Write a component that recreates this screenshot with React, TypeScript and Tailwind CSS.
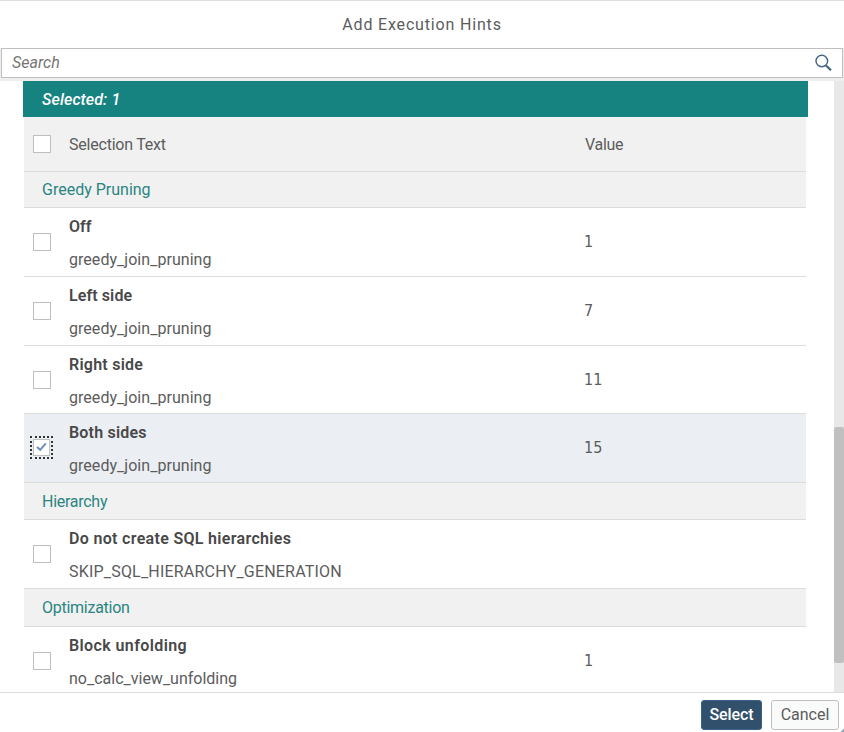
import type { ReactNode } from "react";

function Checkbox({ checked = false }: { checked?: boolean }) {
  return (
    <span
      className={
        checked
          ? "-mt-px flex h-[23px] w-[23px] items-center justify-center border-2 border-dotted border-[#333] bg-[#ebeef3]"
          : "flex h-[23px] w-[23px] items-center justify-center"
      }
    >
      <span
        className={
          checked
            ? "flex h-[17px] w-[17px] shrink-0 items-center justify-center border border-[#bfbfbf] bg-white"
            : "flex h-[18px] w-[18px] shrink-0 items-center justify-center border border-[#bfbfbf] bg-white"
        }
      >
        {checked && (
          <svg viewBox="0 0 11 10" className="-mt-[2px] h-[10px] w-[11px]" fill="none" stroke="#6a8fb8" strokeWidth="2">
            <path d="M1 5 4.2 7.8 9.8 1.4" />
          </svg>
        )}
      </span>
    </span>
  );
}

function Group({ className, children }: { className: string; children: ReactNode }) {
  return (
    <div className={`flex items-center border-b border-[#dcdcdc] bg-[#f1f1f1] pl-[18px] text-[#2a8581] ${className}`}>
      {children}
    </div>
  );
}

interface RowProps {
  title: string;
  titleClass: string;
  code: string;
  codeClass: string;
  value?: string;
  checked?: boolean;
  height: string;
}

function Row({ title, titleClass, code, codeClass, value, checked, height }: RowProps) {
  return (
    <div className={`flex border-b border-[#dcdcdc] pl-[6px] ${height} ${checked ? "bg-[#ebeef3]" : "bg-white"}`}>
      <div className="flex w-[39px] items-center">
        <Checkbox checked={checked} />
      </div>
      <div className="flex w-[515px] flex-col pt-[8px]">
        <span className={`h-[33px] font-semibold leading-[22px] text-[#484848] ${titleClass}`}>{title}</span>
        <span className={`leading-[22px] ${codeClass}`}>{code}</span>
      </div>
      <div className="flex items-center font-['DejaVu_Sans_Condensed','DejaVu_Sans',sans-serif] text-[16px] [font-stretch:condensed]">
        {value}
      </div>
    </div>
  );
}

const pruning = "greedy_join_pruning";

export default function App() {
  return (
    <div className="flex h-[732px] w-[844px] flex-col overflow-hidden whitespace-nowrap border-t border-[#dedede] bg-white font-[Roboto,sans-serif] text-[16px] text-[#5c5c5c]">
      <header className="flex h-[47px] shrink-0 items-center justify-center">
        <h1 className="tracking-[0.83px]">Add Execution Hints</h1>
      </header>

      <div className="h-[33px] shrink-0 bg-[#eeeeee] px-px">
        <div className="flex h-[30px] items-center justify-between border border-[#bfbfbf] bg-white pl-[10px] pr-[10px]">
          <span className="italic text-[#757575]">Search</span>
          <svg viewBox="0 0 18 18" className="h-[18px] w-[18px]" fill="none" stroke="#426387">
            <circle cx="7.8" cy="7" r="5.8" strokeWidth="1.4" />
            <path d="M12 11.5 17 16.3" strokeWidth="2.2" />
          </svg>
        </div>
      </div>

      <main className="flex h-[611px] shrink-0 justify-between overflow-hidden">
        <div className="ml-[23px] w-[785px]">
          <div className="flex h-[36px] items-center bg-[#178381] pl-[19px] pt-px font-medium italic text-white">
            <span className="tracking-[0.1px]">Selected: 1</span>
          </div>
          <div className="ml-px mr-[2px]">
            <div className="flex h-[55px] items-center border-b border-[#dcdcdc] bg-[#f1f1f1] pl-[6px]">
              <div className="w-[39px]">
                <Checkbox />
              </div>
              <div className="w-[516px] pt-px tracking-[-0.22px]">Selection Text</div>
              <div className="pt-px tracking-[-0.3px]">Value</div>
            </div>
            <Group className="h-[36px]">Greedy Pruning</Group>
            <Row title="Off" titleClass="" code={pruning} codeClass="tracking-[0.04px]" value="1" height="h-[69px]" />
            <Row title="Left side" titleClass="tracking-[0.1px]" code={pruning} codeClass="tracking-[0.04px]" value="7" height="h-[69px]" />
            <Row title="Right side" titleClass="tracking-[0.25px]" code={pruning} codeClass="tracking-[0.04px]" value="11" height="h-[68px]" />
            <Row title="Both sides" titleClass="tracking-[0.2px]" code={pruning} codeClass="tracking-[0.04px]" value="15" checked height="h-[69px]" />
            <Group className="h-[37px] pt-px tracking-[-0.27px]">Hierarchy</Group>
            <Row
              title="Do not create SQL hierarchies"
              titleClass="tracking-[0.32px]"
              code="SKIP_SQL_HIERARCHY_GENERATION"
              codeClass="tracking-[0.2px]"
              height="h-[69px]"
            />
            <Group className="h-[38px] tracking-[-0.26px]">Optimization</Group>
            <Row
              title="Block unfolding"
              titleClass="tracking-[0.4px]"
              code="no_calc_view_unfolding"
              codeClass=""
              value="1"
              height="h-[69px]"
            />
          </div>
        </div>
        <div className="w-[10px] bg-[#e8e8e8] pt-[346px]">
          <div className="h-[236px] rounded-[2px] bg-[#c0c0c0]" />
        </div>
      </main>

      <footer className="flex h-[40px] shrink-0 items-start justify-end gap-[9px] border-t border-[#dcdcdc] pr-[5px] pt-[7px]">
        <button className="h-[30px] w-[61px] rounded-[3px] border border-[#3a618a] bg-[#30506b] font-medium tracking-[-0.1px] text-white">
          Select
        </button>
        <button className="h-[30px] w-[68px] rounded-[3px] border border-[#bfbfbf] bg-[#f9fafa]">Cancel</button>
      </footer>
      <svg viewBox="0 0 5 5" className="absolute left-[839px] top-[727px] h-[5px] w-[5px]" fill="#8fa3b8">
        <path d="M5 1.5V5H1.5Z" />
      </svg>
    </div>
  );
}
